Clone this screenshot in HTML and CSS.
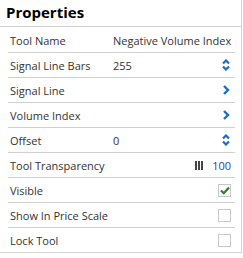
FILE: index.html
```html
<!DOCTYPE html>
<html lang="en">
<head>
    <meta charset="UTF-8">
    <meta name="viewport" content="width=device-width, initial-scale=1.0">
    <title>Properties</title>
    <link rel="stylesheet" href="styles.css">
</head>
<body>
    <div class="panel">
        <div class="panel-title">Properties</div>
        <div class="rows">
            <div class="row">
                <span class="label">Tool Name</span>
                <span class="value">Negative Volume Index</span>
            </div>
            <div class="row">
                <span class="label">Signal Line Bars</span>
                <span class="value">255</span>
                <svg class="icon" width="8" height="12" viewBox="0 0 8 12">
                    <path d="M1 4.5 L4 1.5 L7 4.5 M1 7.5 L4 10.5 L7 7.5" fill="none" stroke="#1b6ec2" stroke-width="2.2"/>
                </svg>
            </div>
            <div class="row">
                <span class="label">Signal Line</span>
                <svg class="icon" width="8" height="10" viewBox="0 0 8 10">
                    <path d="M2 1 L6 5 L2 9" fill="none" stroke="#1b6ec2" stroke-width="2.4"/>
                </svg>
            </div>
            <div class="row">
                <span class="label">Volume Index</span>
                <svg class="icon" width="8" height="10" viewBox="0 0 8 10">
                    <path d="M2 1 L6 5 L2 9" fill="none" stroke="#1b6ec2" stroke-width="2.4"/>
                </svg>
            </div>
            <div class="row">
                <span class="label">Offset</span>
                <span class="value">0</span>
                <svg class="icon" width="8" height="12" viewBox="0 0 8 12">
                    <path d="M1 4.5 L4 1.5 L7 4.5 M1 7.5 L4 10.5 L7 7.5" fill="none" stroke="#1b6ec2" stroke-width="2.2"/>
                </svg>
            </div>
            <div class="row">
                <span class="label">Tool Transparency</span>
                <span class="bars"><i></i><i></i><i></i></span>
                <span class="amount">100</span>
            </div>
            <div class="row">
                <span class="label">Visible</span>
                <span class="check on">
                    <svg width="10" height="9" viewBox="0 0 10 9">
                        <path d="M1 4.5 L3.8 7.2 L9 1.5" fill="none" stroke="#1e8a1e" stroke-width="2.2"/>
                    </svg>
                </span>
            </div>
            <div class="row">
                <span class="label">Show In Price Scale</span>
                <span class="check"></span>
            </div>
            <div class="row">
                <span class="label">Lock Tool</span>
                <span class="check"></span>
            </div>
        </div>
    </div>
</body>
</html>
```

FILE: styles.css
```css
body {
    margin: 0;
    font-family: "Open Sans", Arial, sans-serif;
    background: #fff;
}
.panel {
    width: 242px;
    box-sizing: border-box;
    background: #fff;
    border-right: 1px solid #d4d4d4;
    border-bottom: 1px solid #d4d4d4;
}
.panel-title {
    height: 27px;
    box-sizing: border-box;
    padding: 2px 0 0 6px;
    font-size: 15px;
    font-weight: bold;
    color: #000;
    border-bottom: 1px solid #d0d0d0;
}
.rows {
    padding: 1px 6px 0 8px;
}
.row {
    display: flex;
    align-items: center;
    height: 24px;
    border-bottom: 1px solid #d0d0d0;
    padding: 0 4px 0 2px;
    font-size: 11px;
    color: #333;
}
.row:last-child {
    border-bottom: none;
}
.label {
    width: 103px;
    flex-shrink: 0;
    white-space: nowrap;
}
.value {
    flex: 1;
    white-space: nowrap;
}
.icon {
    margin-left: auto;
    margin-right: 1px;
}
.bars {
    margin-left: auto;
    display: flex;
    gap: 1px;
    margin-right: 9px;
}
.bars i {
    width: 2px;
    height: 9px;
    background: #444;
}
.amount {
    color: #2b3f80;
}
.check {
    margin-left: auto;
    width: 11px;
    height: 11px;
    border: 1px solid #c8c8c8;
    display: flex;
    align-items: center;
    justify-content: center;
}
```
